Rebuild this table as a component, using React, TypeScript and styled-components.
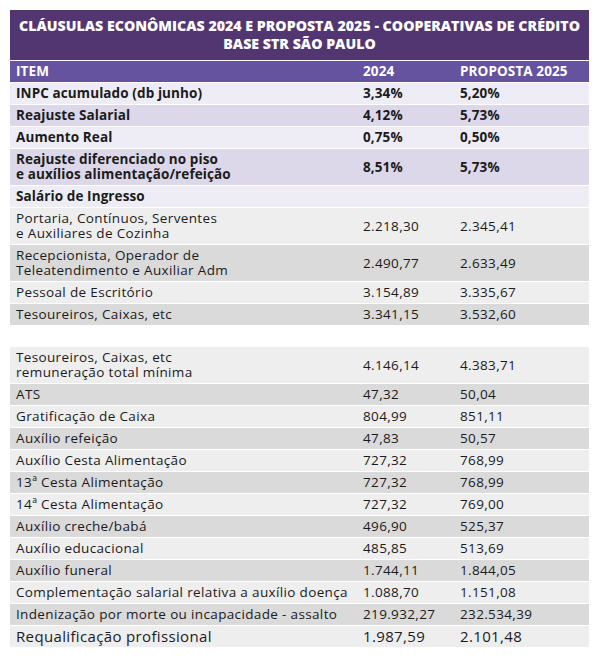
import React from "react";
import styled, { createGlobalStyle } from "styled-components";

const GlobalStyle = createGlobalStyle`
  html, body { margin: 0; padding: 0; background: #ffffff; }
  body { font-family: "Open Sans", "Liberation Sans", sans-serif; }
`;

const Page = styled.div`
  padding: 10px 11px 14px 10px;
  width: 579px;
`;

const Table = styled.div`
  display: flex;
  flex-direction: column;
  gap: 1px;
  background: #ffffff;
`;

const Title = styled.div`
  background: #523672;
  color: #ffffff;
  font-weight: 800;
  font-size: 14.2px;
  line-height: 18px;
  text-align: center;
  padding: 7px 2px 7px;
`;

type Tone = "lavLight" | "lavDark" | "grayLight" | "grayDark" | "head";

const tones: Record<Tone, string> = {
  head: "#6653a0",
  lavLight: "#eeecf5",
  lavDark: "#dcd8ea",
  grayLight: "#eeeeee",
  grayDark: "#dadada",
};

const Row = styled.div<{ $tone: Tone; $bold?: boolean; $big?: boolean }>`
  display: grid;
  grid-template-columns: 347px 97px 1fr;
  align-items: center;
  background: ${(p) => tones[p.$tone]};
  color: ${(p) => (p.$tone === "head" ? "#ffffff" : "#1b1b1b")};
  font-weight: ${(p) => (p.$bold ? 700 : 400)};
  font-size: ${(p) => (p.$big ? "15px" : "13.5px")};
  letter-spacing: ${(p) => (p.$bold ? "0.1px" : "0.35px")};
  line-height: 15px;
  min-height: 21px;
`;

const Cell = styled.div`
  padding: 3px 6px;
  white-space: pre-line;
`;

const Spacer = styled.div`
  height: 20px;
  background: #ffffff;
`;

type R = [string, string, string];

const lavRows: R[] = [
  ["INPC acumulado (db junho)", "3,34%", "5,20%"],
  ["Reajuste Salarial", "4,12%", "5,73%"],
  ["Aumento Real", "0,75%", "0,50%"],
  ["Reajuste diferenciado no piso\ne auxílios alimentação/refeição", "8,51%", "5,73%"],
  ["Salário de Ingresso", "", ""],
];

const grayRows1: R[] = [
  ["Portaria, Contínuos, Serventes\ne Auxiliares de Cozinha", "2.218,30", "2.345,41"],
  ["Recepcionista, Operador de\nTeleatendimento e Auxiliar Adm", "2.490,77", "2.633,49"],
  ["Pessoal de Escritório", "3.154,89", "3.335,67"],
  ["Tesoureiros, Caixas, etc", "3.341,15", "3.532,60"],
];

const grayRows2: R[] = [
  ["Tesoureiros, Caixas, etc\nremuneração total mínima", "4.146,14", "4.383,71"],
  ["ATS", "47,32", "50,04"],
  ["Gratificação de Caixa", "804,99", "851,11"],
  ["Auxílio refeição", "47,83", "50,57"],
  ["Auxílio Cesta Alimentação", "727,32", "768,99"],
  ["13ª Cesta Alimentação", "727,32", "768,99"],
  ["14ª Cesta Alimentação", "727,32", "769,00"],
  ["Auxílio creche/babá", "496,90", "525,37"],
  ["Auxílio educacional", "485,85", "513,69"],
  ["Auxílio funeral", "1.744,11", "1.844,05"],
  ["Complementação salarial relativa a auxílio doença", "1.088,70", "1.151,08"],
  ["Indenização por morte ou incapacidade - assalto", "219.932,27", "232.534,39"],
];

const Cells = ({ r }: { r: R }) => (
  <>
    <Cell>{r[0]}</Cell>
    <Cell>{r[1]}</Cell>
    <Cell>{r[2]}</Cell>
  </>
);

export default function App() {
  return (
    <>
      <GlobalStyle />
      <Page>
        <Table>
          <Title>
            CLÁUSULAS ECONÔMICAS 2024 E PROPOSTA 2025 - COOPERATIVAS DE CRÉDITO
            <br />
            BASE STR SÃO PAULO
          </Title>
          <Row $tone="head" $bold>
            <Cells r={["ITEM", "2024", "PROPOSTA 2025"]} />
          </Row>
          {lavRows.map((r, i) => (
            <Row key={r[0]} $tone={i % 2 === 0 ? "lavLight" : "lavDark"} $bold>
              <Cells r={r} />
            </Row>
          ))}
          {grayRows1.map((r, i) => (
            <Row key={r[0]} $tone={i % 2 === 0 ? "grayLight" : "grayDark"}>
              <Cells r={r} />
            </Row>
          ))}
          <Spacer />
          {grayRows2.map((r, i) => (
            <Row key={r[0]} $tone={i % 2 === 0 ? "grayLight" : "grayDark"}>
              <Cells r={r} />
            </Row>
          ))}
          <Row $tone="grayLight" $big>
            <Cells r={["Requalificação profissional", "1.987,59", "2.101,48"]} />
          </Row>
        </Table>
      </Page>
    </>
  );
}
